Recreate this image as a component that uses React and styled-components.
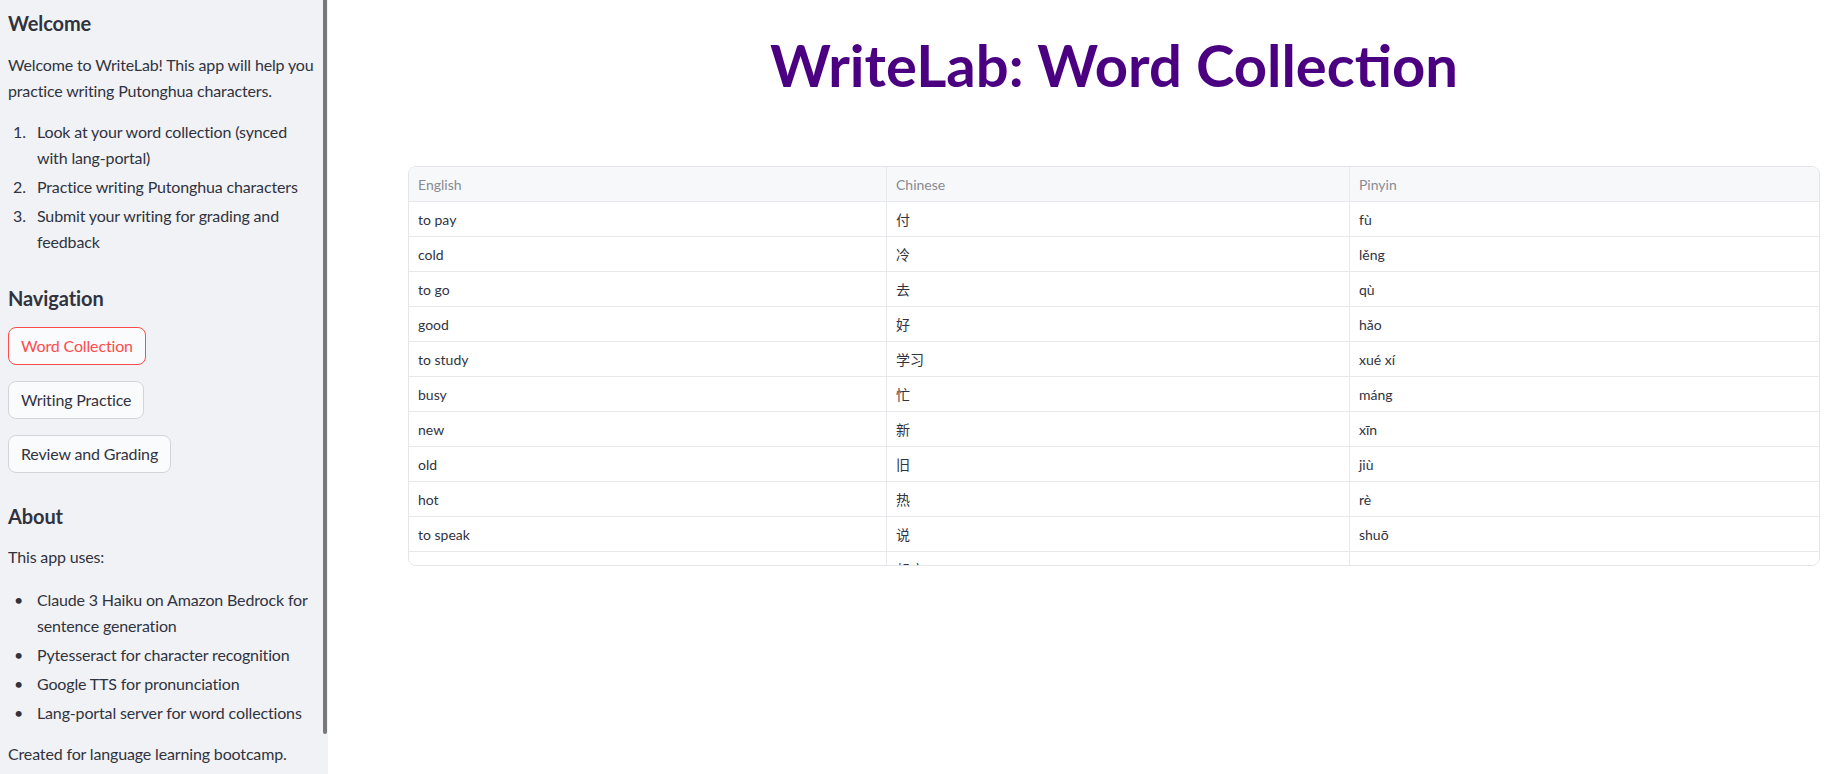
import React from "react";
import styled, { createGlobalStyle } from "styled-components";

const GlobalStyle = createGlobalStyle`
  html, body { margin: 0; padding: 0; background: #ffffff; }
  body {
    font-family: Lato, "Noto Sans CJK SC", sans-serif;
    color: #31333f;
    -webkit-font-smoothing: antialiased;
  }
  * { box-sizing: border-box; }
`;

const Shell = styled.div`
  display: flex;
  height: 774px;
  overflow: hidden;
`;

const Sidebar = styled.aside`
  position: relative;
  flex: 0 0 328px;
  background: #f0f2f6;
  padding: 11px 4px 0 8px;
  overflow: hidden;
  letter-spacing: -0.15px;
`;

const ScrollThumb = styled.div`
  position: absolute;
  top: 0;
  right: 1px;
  width: 4px;
  height: 734px;
  border-radius: 0 0 2px 2px;
  background: #787878;
`;

const SideHeading = styled.h3`
  margin: ${(p) => p.$top || 0}px 0 0 0;
  font-size: 20px;
  line-height: 24px;
  font-weight: 700;
  color: #31333f;
  letter-spacing: -0.1px;
`;

const Para = styled.p`
  margin: ${(p) => p.$top || 0}px 0 0 0;
  font-size: 16px;
  line-height: 26px;
  color: #31333f;
`;

const List = styled.ul`
  list-style: none;
  margin: ${(p) => p.$top || 0}px 0 0 0;
  padding: 0;
`;

const Item = styled.li`
  display: flex;
  font-size: 16px;
  line-height: 26px;
  margin-top: 3px;
  &:first-child { margin-top: 0; }
`;

const Marker = styled.span`
  flex: 0 0 29px;
  padding-left: ${(p) => (p.$bullet ? 6 : 5)}px;
`;

const ItemText = styled.span`
  flex: 1;
  padding-right: ${(p) => p.$pr || 0}px;
`;

const NavStack = styled.div`
  display: flex;
  flex-direction: column;
  align-items: flex-start;
  gap: 16px;
  margin-top: 17px;
`;

const NavButton = styled.button`
  height: 38px;
  padding: 0 12px;
  border-radius: 8px;
  border: 1px solid ${(p) => (p.$active ? "#ff4b4b" : "#d3d4d9")};
  background: #fafbfc;
  color: ${(p) => (p.$active ? "#ff4b4b" : "#31333f")};
  font-family: Lato, sans-serif;
  font-size: 16px;
  letter-spacing: -0.15px;
  line-height: 1;
  cursor: pointer;
`;

const Main = styled.main`
  flex: 1;
  min-width: 0;
  padding: 0 9px 0 80px;
`;

const Title = styled.h1`
  margin: 30px 0 0 0;
  text-align: center;
  font-family: Lato, sans-serif;
  font-size: 58px;
  line-height: 70px;
  font-weight: 700;
  color: #4b0082;
`;

const TableFrame = styled.div`
  margin-top: 66px;
  height: 400px;
  border: 1px solid #e4e5e9;
  border-radius: 8px;
  overflow: hidden;
`;

const Grid = styled.div`
  display: grid;
  grid-template-columns: 478px 463px 1fr;
`;

const Cell = styled.div`
  height: 35px;
  display: flex;
  align-items: center;
  padding: 0 9px;
  font-family: Lato, "Noto Sans CJK SC", sans-serif;
  font-size: 14px;
  color: ${(p) => (p.$head ? "#898b94" : "#31333f")};
  background: ${(p) => (p.$head ? "#f7f8fa" : "#ffffff")};
  border-bottom: 1px solid #e8e9ec;
  border-right: ${(p) => (p.$last ? "none" : "1px solid #e8e9ec")};
  white-space: nowrap;
`;

const words = [
  ["to pay", "付", "fù"],
  ["cold", "冷", "lěng"],
  ["to go", "去", "qù"],
  ["good", "好", "hǎo"],
  ["to study", "学习", "xué xí"],
  ["busy", "忙", "máng"],
  ["new", "新", "xīn"],
  ["old", "旧", "jiù"],
  ["hot", "热", "rè"],
  ["to speak", "说", "shuō"],
  ["to get up", "起床", "qǐ chuáng"],
  ["to eat", "吃", "chī"],
];

export default function App() {
  return (
    <>
      <GlobalStyle />
      <Shell>
        <Sidebar>
          <ScrollThumb />
          <SideHeading>Welcome</SideHeading>
          <Para $top={17}>
            Welcome to WriteLab! This app will help you practice writing Putonghua characters.
          </Para>
          <List as="ol" $top={15}>
            <Item><Marker>1.</Marker><ItemText $pr={4}>Look at your word collection (synced with lang-portal)</ItemText></Item>
            <Item><Marker>2.</Marker><ItemText>Practice writing Putonghua characters</ItemText></Item>
            <Item><Marker>3.</Marker><ItemText $pr={4}>Submit your writing for grading and feedback</ItemText></Item>
          </List>
          <SideHeading $top={31}>Navigation</SideHeading>
          <NavStack>
            <NavButton $active>Word Collection</NavButton>
            <NavButton>Writing Practice</NavButton>
            <NavButton>Review and Grading</NavButton>
          </NavStack>
          <SideHeading $top={31}>About</SideHeading>
          <Para $top={16}>This app uses:</Para>
          <List $top={17}>
            <Item><Marker $bullet>•</Marker><ItemText>Claude 3 Haiku on Amazon Bedrock for sentence generation</ItemText></Item>
            <Item><Marker $bullet>•</Marker><ItemText>Pytesseract for character recognition</ItemText></Item>
            <Item><Marker $bullet>•</Marker><ItemText>Google TTS for pronunciation</ItemText></Item>
            <Item><Marker $bullet>•</Marker><ItemText>Lang-portal server for word collections</ItemText></Item>
          </List>
          <Para $top={15}>Created for language learning bootcamp.</Para>
        </Sidebar>
        <Main>
          <Title>WriteLab: Word Collection</Title>
          <TableFrame>
            <Grid>
              <Cell $head>English</Cell>
              <Cell $head>Chinese</Cell>
              <Cell $head $last>Pinyin</Cell>
              {words.map(([en, zh, py]) => (
                <React.Fragment key={en}>
                  <Cell>{en}</Cell>
                  <Cell>{zh}</Cell>
                  <Cell $last>{py}</Cell>
                </React.Fragment>
              ))}
            </Grid>
          </TableFrame>
        </Main>
      </Shell>
    </>
  );
}
